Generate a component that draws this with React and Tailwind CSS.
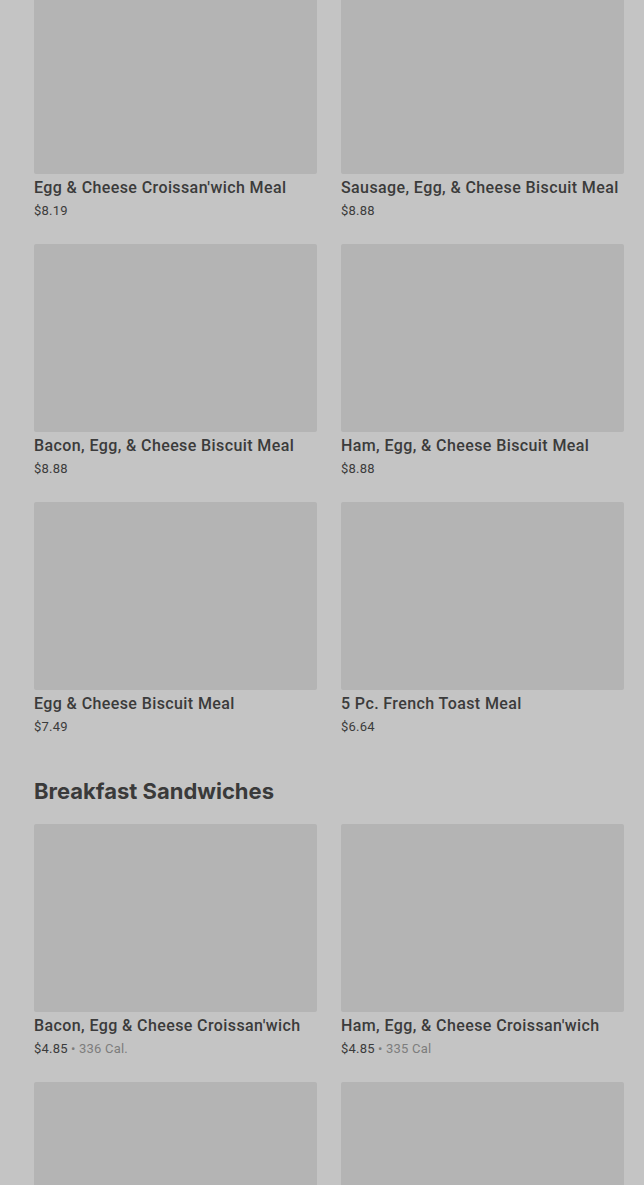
import React from 'react';

const meals = [
  { name: "Egg & Cheese Croissan'wich Meal", price: '$8.19' },
  { name: 'Sausage, Egg, & Cheese Biscuit Meal', price: '$8.88' },
  { name: 'Bacon, Egg, & Cheese Biscuit Meal', price: '$8.88' },
  { name: 'Ham, Egg, & Cheese Biscuit Meal', price: '$8.88' },
  { name: 'Egg & Cheese Biscuit Meal', price: '$7.49' },
  { name: '5 Pc. French Toast Meal', price: '$6.64' },
];

const sandwiches = [
  { name: "Bacon, Egg & Cheese Croissan'wich", price: '$4.85', cal: '336 Cal.' },
  { name: "Ham, Egg, & Cheese Croissan'wich", price: '$4.85', cal: '335 Cal' },
  { name: '', price: '' },
  { name: '', price: '' },
];

const ItemCard = ({ item }) => (
  <div className="flex flex-col">
    <div className="h-[188px] w-full rounded-[2px] bg-[#b4b4b4]"></div>
    <div className="mt-px truncate text-base leading-[26px] font-medium tracking-[0.4px] text-[#3b3b3b]">{item.name}</div>
    <div className="text-[13px] leading-5 tracking-[0.2px] text-[#3b3b3b]">
      {item.price}
      {item.cal && (
        <span className="text-[#7d7d7d]"> • {item.cal}</span>
      )}
    </div>
  </div>
);

export default function App() {
  return (
    <div
      className="h-[1185px] overflow-hidden bg-[#c4c4c4] pl-[34px] pr-5"
      style={{ fontFamily: 'Roboto, "Liberation Sans", sans-serif' }}
    >
      <div className="-mt-[14px] grid grid-cols-2 gap-x-6 gap-y-[23px]">
        {meals.map((m) => (
          <ItemCard key={m.name} item={m} />
        ))}
      </div>
      <h2
        className="mt-[41px] mb-5 text-[22px] leading-[26px] font-bold text-[#3a3a3a]"
        style={{ fontFamily: 'Inter, "Liberation Sans", sans-serif' }}
      >
        Breakfast Sandwiches
      </h2>
      <div className="grid grid-cols-2 gap-x-6 gap-y-[23px]">
        {sandwiches.map((m, i) => (
          <ItemCard key={i} item={m} />
        ))}
      </div>
    </div>
  );
}
